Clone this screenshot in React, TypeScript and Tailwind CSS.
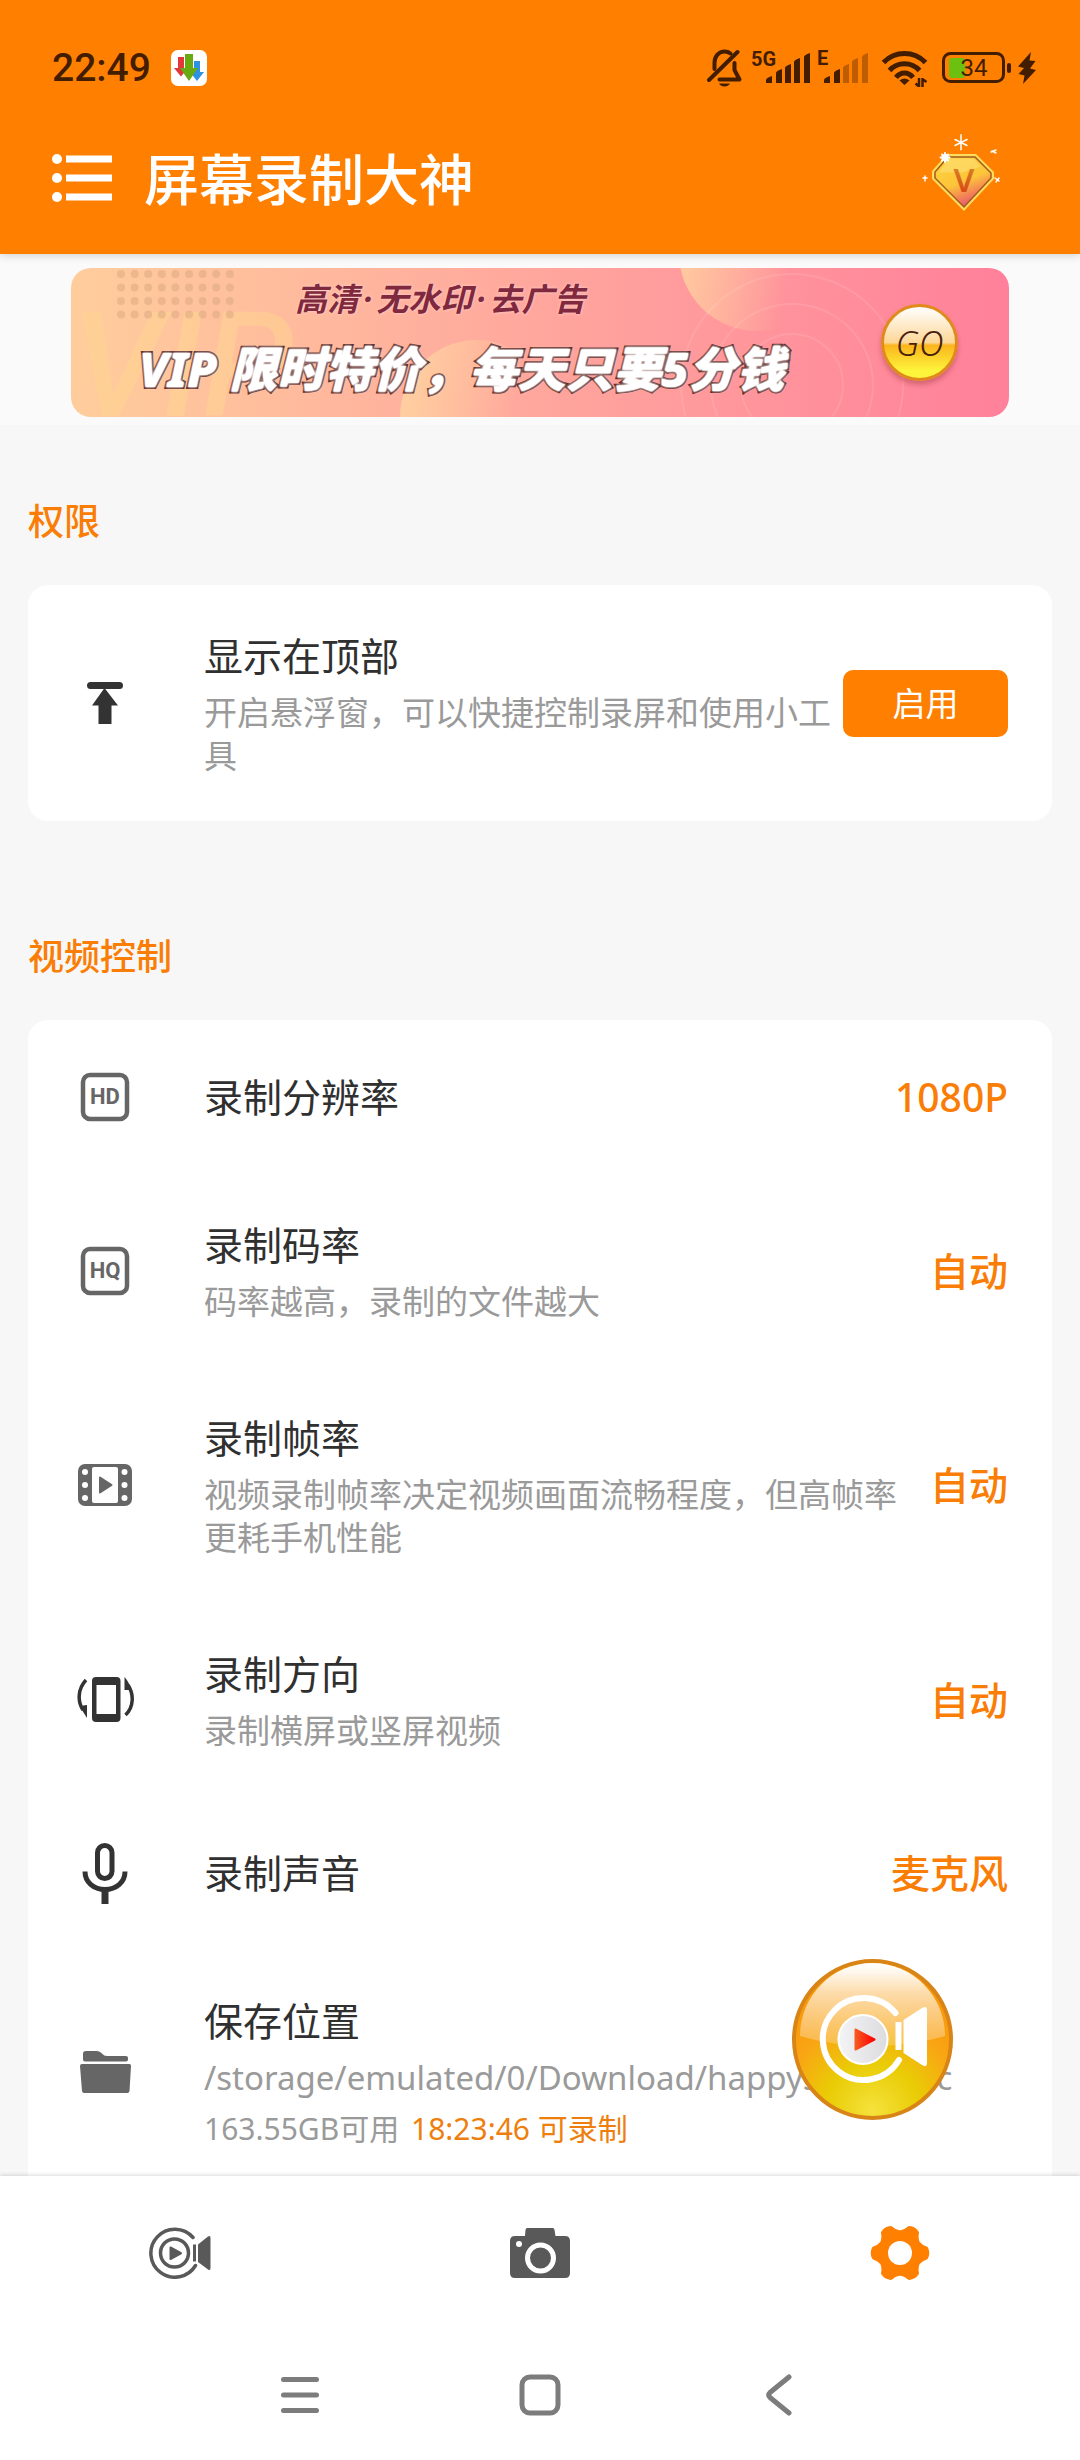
import type { ReactNode } from "react";

function StatusIcons() {
  return (
    <div className="flex items-center text-[#431d00]">
      <svg width="36" height="38" viewBox="0 0 36 38" fill="none" stroke="currentColor" strokeWidth="4" strokeLinecap="round" strokeLinejoin="round" aria-label="静音">
        <path d="M7.5 20V14C7.500 7 12 2.500 17.500 2.500c2.500 0 4.500.800 6 2" />
        <path d="M2 31L30.500 3" />
        <path d="M27.500 14v7l5 9.500H12.500" />
        <path d="M12 34.500h11c-1 2-3 3-5.500 3s-4.500-1-5.500-3z" fill="currentColor" stroke="none" />
      </svg>
      <svg className="ml-2" width="60" height="44" viewBox="0 0 60 44" fill="currentColor" aria-label="5G">
        <text x="0" y="20" fontFamily="Roboto, sans-serif" fontWeight="700" fontSize="20">5G</text>
        <path d="M15 37v-3q0-2 6-4v7zM25 37V27q0-2 6-4v14zM34 37V22q0-2 6-4v19zM43 37V16q0-2 6-4v25zM53 37V11q0-2 6-4v30z" />
      </svg>
      <svg className="ml-1.5" width="52" height="44" viewBox="0 0 52 44" fill="currentColor" aria-label="E">
        <text x="0" y="19" fontFamily="Roboto, sans-serif" fontWeight="700" fontSize="20">E</text>
        <path d="M7 37v-3q0-2 6-4v7zM17 37V27q0-2 6-4v14z" />
        <path opacity=".35" d="M26 37V22q0-2 6-4v19zM35 37V16q0-2 6-4v25zM45 37V11q0-2 6-4v30z" />
      </svg>
      <svg className="ml-3" width="47" height="38" viewBox="0 0 47 38" fill="none" stroke="currentColor" strokeWidth="5" aria-label="Wi-Fi">
        <path d="M2.500 13.500C14 1.500 33 1.500 44.500 13.500" />
        <path d="M8.500 21.500C16.500 12.500 30.500 12.500 38.500 21.500" />
        <path d="M15 28.500C19.500 22.500 27.500 22.500 32 28.500" />
        <path d="M18.500 31.500q5-4 10 0L23.500 36z" fill="currentColor" stroke="none" />
        <path d="M38 29v9M34.500 34.500l3.500 3M41.500 38v-9M41.500 30l4 3" strokeWidth="2.500" />
      </svg>
      <svg className="ml-3.5" width="70" height="32" viewBox="0 0 70 32" aria-label="电量 34%">
        <rect x="7" y="6" width="16" height="20" rx="3" fill="#6cc010" />
        <rect x="1.500" y="1.500" width="60" height="28" rx="7" fill="none" stroke="currentColor" strokeWidth="3" />
        <rect x="65" y="11" width="4" height="10" rx="2" fill="currentColor" />
        <text x="32" y="24" textAnchor="middle" fontFamily="Roboto, sans-serif" fontSize="24" fill="currentColor">34</text>
      </svg>
      <svg className="ml-1.5" width="18" height="32" viewBox="0 0 18 32" fill="currentColor" aria-label="充电中">
        <path d="M13 0L0 14.500l6 1.500L.500 22l6 1.500L5 32 18 18l-6-1.500L17.500 9l-6-.500z" />
      </svg>
    </div>
  );
}

function DownloadBadge() {
  return (
    <svg width="36" height="36" viewBox="0 0 36 36" aria-hidden="true">
      <rect width="36" height="36" rx="7" fill="#fff" />
      <path d="M7 7h6v11h4l-7 8.500L3 18h4z" fill="#e2383a" />
      <path d="M23 11h6v11h4l-7 9-7-9h4z" fill="#2f92e0" />
      <path d="M14 4h8v14h5l-9 13-9-13h5z" fill="#67aa12" />
    </svg>
  );
}

function VipGem() {
  return (
    <svg width="80" height="90" viewBox="0 0 80 90" aria-hidden="true">
      <defs>
        <linearGradient id="gem" x1="0.25" y1="0" x2="0.7" y2="1">
          <stop offset="0" stopColor="#fdd23c" />
          <stop offset=".5" stopColor="#fcc53a" />
          <stop offset=".72" stopColor="#f58a52" />
          <stop offset="1" stopColor="#e14580" />
        </linearGradient>
        <linearGradient id="gemV" x1="0" y1="0" x2="0" y2="1">
          <stop offset="0" stopColor="#d99a2c" />
          <stop offset="1" stopColor="#d8300e" />
        </linearGradient>
      </defs>
      <path d="M25 20h29l18 18v7L42 77 10 45v-8z" fill="#fbdc5c" />
      <path d="M26 23h27l16 16v5L42 73 13 44v-6z" fill="url(#gem)" stroke="#a55a1c" strokeWidth="1.500" />
      <path d="M27 24.500h24l8 8-18 6-24 0z" fill="#ffe58a" opacity=".45" />
      <text x="42" y="58" textAnchor="middle" fontFamily="'Noto Sans', sans-serif" fontWeight="600" fontSize="33" fill="url(#gemV)">V</text>
      <g stroke="#fff" strokeWidth="1.500" strokeLinecap="round">
        <path d="M39 .800v15M33 5.500l12 6M33 11.500l12-6" />
        <path d="M23 19v9M18.500 23.500h9M20 20.500l6 6M20 26.500l6-6" strokeWidth="2" />
        <path d="M1 44h4M3 42v5M73 44l4 3M77 44l-3 4M69 18l5-2M70 17l4 2" />
      </g>
      <circle cx="23" cy="23.500" r="3.500" fill="#fff" />
    </svg>
  );
}

function BannerArt() {
  const dots = [];
  for (let r = 0; r < 4; r++) for (let c = 0; c < 9; c++) dots.push([50 + c * 13.6, 6 + r * 13.5]);
  return (
    <svg className="absolute inset-0 h-full w-full" viewBox="0 0 938 149" preserveAspectRatio="xMidYMid slice" aria-hidden="true">
      <defs>
        <linearGradient id="peach" x1="0" x2="1" y1="0" y2="0.2">
          <stop offset="0" stopColor="#ffd2a0" />
          <stop offset=".8" stopColor="#ffd2a0" stopOpacity="0" />
        </linearGradient>
      </defs>
      <text x="0" y="148" fontFamily="Roboto, sans-serif" fontStyle="italic" fontWeight="500" fontSize="146" fill="#ffd590" opacity=".5">VIP</text>
      {dots.map(([x, y], i) => (
        <circle key={i} cx={x} cy={y} r="4" fill="#dca982" opacity=".55" />
      ))}
      <circle cx="686" cy="-15" r="78" fill="url(#peach)" />
      <circle cx="406" cy="149" r="77" fill="url(#peach)" />
      <g fill="none" stroke="#fff" strokeOpacity=".1" strokeWidth="2">
        <circle cx="721" cy="117" r="51" />
        <circle cx="721" cy="117" r="81" />
        <circle cx="721" cy="117" r="111" />
      </g>
    </svg>
  );
}

function TopArrowIcon() {
  return (
    <svg width="36" height="42" viewBox="0 0 36 42" fill="#333" aria-hidden="true">
      <rect width="36" height="7" rx="3.500" />
      <path d="M17.500 6L31 23.500h-6.500V42h-13V23.500H5z" />
    </svg>
  );
}

function BoxedLabelIcon({ label }: { label: string }) {
  return (
    <svg width="50" height="50" viewBox="0 0 50 50" aria-hidden="true">
      <rect x="3" y="3" width="44" height="44" rx="7" fill="none" stroke="#666" strokeWidth="4.500" />
      <text x="25" y="32" textAnchor="middle" fontFamily="Roboto, sans-serif" fontWeight="700" fontSize="22" fill="#666">{label}</text>
    </svg>
  );
}

function FilmIcon() {
  return (
    <svg width="54" height="42" viewBox="0 0 54 42" aria-hidden="true">
      <rect width="54" height="42" rx="7" fill="#666" />
      <rect x="14" y="3" width="26" height="36" rx="2" fill="#fff" />
      <path d="M22 13.500L33.500 21 22 28.500z" fill="#666" stroke="#666" strokeWidth="2" strokeLinejoin="round" />
      <g fill="#fff">
        <circle cx="7" cy="8" r="3" /><circle cx="7" cy="21" r="3" /><circle cx="7" cy="34" r="3" />
        <circle cx="46.500" cy="8" r="3" /><circle cx="46.500" cy="21" r="3" /><circle cx="46.500" cy="34" r="3" />
      </g>
    </svg>
  );
}

function RotateIcon() {
  return (
    <svg width="57" height="46" viewBox="0 0 57 46" fill="none" stroke="#333" strokeWidth="3.500" aria-hidden="true">
      <rect x="15" width="28.500" height="45" rx="4" fill="#333" stroke="none" />
      <rect x="19.500" y="8" width="19.500" height="29" fill="#fff" stroke="none" />
      <path d="M9 3C.500 12 .500 25 6 33" />
      <path d="M10 28v13L3 30q3-2 7-2z" fill="#333" stroke="none" />
      <path d="M48.500 38C57 30 57 17 51 8" />
      <path d="M47.500 0v13h6Q53 6 47.500 0z" fill="#333" stroke="none" />
    </svg>
  );
}

function MicIcon() {
  return (
    <svg width="46" height="61" viewBox="0 0 46 61" fill="none" stroke="#333" aria-hidden="true">
      <rect x="15.500" y="2.500" width="14.500" height="33" rx="7.250" strokeWidth="5" />
      <path d="M3 28.500c0 11 9 18 20 18s20-7 20-18" strokeWidth="5" />
      <path d="M23 46v15" strokeWidth="7" />
    </svg>
  );
}

function FolderIcon() {
  return (
    <svg width="51" height="42" viewBox="0 0 51 42" fill="#666" aria-hidden="true">
      <path d="M3 2.500Q3 0 6 0h11q3 0 5 2.500T27 5h19q2 0 2 2v1.500q0 2-2 2H5q-2 0-2-2z" />
      <path d="M2 13h47q2.200 0 2 2l-1.500 25q-.200 2-2.200 2H4.200q-2 0-2.200-2L0 15q0-2 2-2z" />
    </svg>
  );
}

function RecordTabIcon() {
  return (
    <svg width="62" height="52" viewBox="0 0 62 52" fill="none" stroke="#595959" strokeWidth="3.500" aria-hidden="true">
      <path d="M44 10.500A24 24 0 1 0 46.500 38.500" strokeLinecap="round" />
      <circle cx="25.500" cy="26" r="14" />
      <path d="M21.500 20.500v11.500l10.500-5.750z" fill="#595959" strokeWidth="2" strokeLinejoin="round" />
      <path d="M45.500 17.500v17" strokeWidth="3" />
      <path d="M49 17.500L59 9.500Q61.500 8 61.500 11V41q0 3-2.500 1.500L49 35z" fill="#595959" stroke="none" />
    </svg>
  );
}

function CameraTabIcon() {
  return (
    <svg width="60" height="50" viewBox="0 0 60 50" aria-hidden="true">
      <path d="M17.500 0h25q2 0 2 2l1 6H55q5 0 5 5v32q0 5-5 5H5q-5 0-5-5V13q0-5 5-5h10l.500-6q0-2 2-2z" fill="#595959" />
      <circle cx="30.500" cy="30" r="13" fill="none" stroke="#fff" strokeWidth="5" />
      <circle cx="9" cy="16" r="3" fill="#fff" />
    </svg>
  );
}

function GearTabIcon() {
  const p = (r: number, deg: number) => {
    const a = (deg * Math.PI) / 180;
    return `${(30 + r * Math.cos(a)).toFixed(2)} ${(30 + r * Math.sin(a)).toFixed(2)}`;
  };
  let d = "M" + p(26.5, -10);
  for (let a = 0; a < 360; a += 60) {
    d += `Q${p(28.5, a)} ${p(26.5, a + 10)}Q${p(22, a + 16)} ${p(20.5, a + 30)}Q${p(22, a + 44)} ${p(26.5, a + 50)}`;
  }
  return (
    <svg width="60" height="60" viewBox="0 0 60 60" aria-hidden="true">
      <path d={d + "z"} fill="#ff7f00" stroke="#ff7f00" strokeWidth="4" strokeLinejoin="round" />
      <circle cx="30" cy="30" r="12" fill="#fff" />
    </svg>
  );
}

function FloatingRecordArt() {
  return (
    <svg width="161" height="161" viewBox="0 0 161 161" aria-hidden="true">
      <defs>
        <radialGradient id="orb" cx=".5" cy=".95" r=".75">
          <stop offset="0" stopColor="#f5e23c" />
          <stop offset=".4" stopColor="#e9cc05" />
          <stop offset=".75" stopColor="#f9a614" />
          <stop offset="1" stopColor="#f99a0c" />
        </radialGradient>
        <linearGradient id="gloss" x1="0" x2="0" y1="0" y2="1">
          <stop offset="0" stopColor="#fff" />
          <stop offset=".12" stopColor="#fff" stopOpacity=".92" />
          <stop offset=".35" stopColor="#fff" stopOpacity=".66" />
          <stop offset="1" stopColor="#fff" stopOpacity=".2" />
        </linearGradient>
        <linearGradient id="play" x1="0" x2="1"><stop offset="0" stopColor="#f65a20" /><stop offset="1" stopColor="#f00" /></linearGradient>
        <linearGradient id="disc" x1="0" x2="1"><stop offset="0" stopColor="#f4f4f6" /><stop offset="1" stopColor="#dcdcde" /></linearGradient>
      </defs>
      <circle cx="80.500" cy="80.500" r="78.500" fill="url(#orb)" stroke="#d98416" strokeWidth="4" />
      <path d="M8 77A72.500 73 0 0 1 153 77Q120 87 80 87T8 77z" fill="url(#gloss)" />
      <path d="M103.500 54A41 41 0 1 0 107 101" fill="none" stroke="#fff" strokeWidth="6" strokeLinecap="round" />
      <path d="M106.500 63v28" stroke="#fff" strokeWidth="6" />
      <path d="M111.500 61L130 49Q135 46 135 51v53q0 5-5 2L111.500 94z" fill="#fff" />
      <circle cx="71" cy="80.500" r="24.500" fill="url(#disc)" stroke="#fff" strokeWidth="2" />
      <path d="M63.500 70.500L82.500 80.500 63.500 90.500z" fill="url(#play)" stroke="url(#play)" strokeWidth="2" strokeLinejoin="round" />
    </svg>
  );
}

function RowText({ title, children }: { title: string; children?: ReactNode }) {
  return (
    <span className="flex min-w-0 flex-1 flex-col gap-2">
      <span className="text-[39px] leading-[54px] text-[#303030]">{title}</span>
      {children}
    </span>
  );
}

function Desc({ children }: { children: ReactNode }) {
  return <span className="text-[33px] leading-[43px] text-[#9a9a9a]">{children}</span>;
}

function SettingRow({ icon, title, value, children }: { icon: ReactNode; title: string; value?: string; children?: ReactNode }) {
  return (
    <button type="button" className="flex min-h-[154px] w-full items-center gap-2 py-[44px] pr-[44px] text-left">
      <span className="mr-[14px] flex w-[154px] shrink-0 justify-center">{icon}</span>
      <RowText title={title}>{children}</RowText>
      {value && <span className="shrink-0 text-[39px] leading-[54px] font-medium text-[#fa7d05]">{value}</span>}
    </button>
  );
}

function Section({ title, children }: { title: string; children: ReactNode }) {
  return (
    <section className="px-7">
      <h2 className="py-9 text-[36px] leading-[54px] font-medium text-[#fa7d05]">{title}</h2>
      <div className="rounded-[20px] bg-white">{children}</div>
    </section>
  );
}

export default function App() {
  return (
    <div lang="zh-CN" className="relative flex h-screen flex-col bg-[#f7f7f7] font-['Noto_Sans','Noto_Sans_CJK_SC',sans-serif]">
      <header className="z-10 shrink-0 bg-[#ff7f00] shadow-[0_2px_8px_rgba(0,0,0,0.15)]">
        <div className="flex h-[104px] items-center justify-between pt-8 pr-[44px] pl-[52px]">
          <div className="flex items-center gap-5">
            <span className="font-['Roboto',sans-serif] text-[39px] leading-[44px] font-medium text-[#431d00]">22:49</span>
            <DownloadBadge />
          </div>
          <StatusIcons />
        </div>
        <div className="flex h-[150px] items-center pr-[78px] pl-[52px]">
          <button type="button" aria-label="菜单">
            <svg width="60" height="50" viewBox="0 0 60 50" fill="#fff" aria-hidden="true">
              <circle cx="5" cy="5" r="5" /><circle cx="5" cy="24" r="5" /><circle cx="5" cy="43" r="5" />
              <rect x="14" y="1.500" width="46" height="7" /><rect x="14" y="20.500" width="46" height="7" /><rect x="14" y="39.500" width="46" height="7" />
            </svg>
          </button>
          <h1 className="ml-8 flex-1 text-[55px] leading-[72px] font-medium text-white">屏幕录制大神</h1>
          <button type="button" aria-label="VIP">
            <VipGem />
          </button>
        </div>
      </header>

      <main className="min-h-0 flex-1 overflow-y-auto [scrollbar-width:none]">
        <div className="mb-[34px] bg-[#fafafa] px-[71px] pt-[14px] pb-2">
          <div className="relative flex h-[149px] items-center justify-between overflow-hidden rounded-[20px] bg-linear-to-r from-[#ffcd9c] via-[#ffa69d] to-[#ff809a] pr-[51px] pl-[68px]">
            <BannerArt />
            <div className="relative flex h-full flex-col items-start gap-5 pt-2 italic">
              <p className="pl-[156px] text-[32px] leading-[46px] font-bold whitespace-nowrap text-[#80283d] [text-shadow:0_0_3px_#ffd9d9]">
                高清<span className="mx-1">·</span>无水印<span className="mx-1">·</span>去广告
              </p>
              <p className="text-[48px] leading-[54px] font-extrabold whitespace-nowrap text-white [-webkit-text-stroke:4px_#5c2a26] [paint-order:stroke_fill] [text-shadow:0_0_3px_#fff,0_0_2px_#fff]">
                VIP 限时特价，每天只要5分钱
              </p>
            </div>
            <button type="button" className="relative flex size-[77px] items-center justify-center rounded-full border-3 border-[#e08a1c] bg-[linear-gradient(#fff,#fdd797_50%,#fbb51c_54%,#fdf53c_90%)] text-[34px] leading-none font-light text-[#4a1d0c] italic shadow-[0_4px_5px_rgba(150,50,60,0.4)]">
              GO
            </button>
          </div>
        </div>

        <div className="flex flex-col gap-[73px]">
          <Section title="权限">
            <div className="flex items-center gap-2 py-[44px] pr-[44px]">
              <span className="mr-[14px] flex w-[154px] shrink-0 justify-center"><TopArrowIcon /></span>
              <RowText title="显示在顶部">
                <Desc>开启悬浮窗，可以快捷控制录屏和使用小工具</Desc>
              </RowText>
              <button type="button" className="h-[67px] w-[165px] shrink-0 rounded-[10px] bg-[#ff7f00] text-[33px] leading-[43px] text-white">启用</button>
            </div>
          </Section>

          <Section title="视频控制">
            <SettingRow icon={<BoxedLabelIcon label="HD" />} title="录制分辨率" value="1080P" />
            <SettingRow icon={<BoxedLabelIcon label="HQ" />} title="录制码率" value="自动">
              <Desc>码率越高，录制的文件越大</Desc>
            </SettingRow>
            <SettingRow icon={<FilmIcon />} title="录制帧率" value="自动">
              <Desc>视频录制帧率决定视频画面流畅程度，但高帧率更耗手机性能</Desc>
            </SettingRow>
            <SettingRow icon={<RotateIcon />} title="录制方向" value="自动">
              <Desc>录制横屏或竖屏视频</Desc>
            </SettingRow>
            <SettingRow icon={<MicIcon />} title="录制声音" value="麦克风" />
            <SettingRow icon={<FolderIcon />} title="保存位置">
              <Desc>/storage/emulated/0/Download/happyscreenrec</Desc>
              <span className="text-[30px] leading-[43px] text-[#9a9a9a]">
                163.55GB可用 <span className="ml-1 text-[#ee7f0e]">18:23:46 可录制</span>
              </span>
            </SettingRow>
          </Section>
        </div>
      </main>

      <button type="button" aria-label="开始录制" className="absolute right-[127px] bottom-[340px]">
        <FloatingRecordArt />
      </button>

      <footer className="z-10 shrink-0 bg-white shadow-[0_-1px_4px_rgba(0,0,0,0.15)]">
        <nav className="grid h-[154px] grid-cols-3 place-items-center">
          <button type="button" aria-label="录屏"><RecordTabIcon /></button>
          <button type="button" aria-label="截图"><CameraTabIcon /></button>
          <button type="button" aria-label="设置" aria-current="page"><GearTabIcon /></button>
        </nav>
        <div className="mx-auto grid h-[130px] w-2/3 grid-cols-3 place-items-center text-[#7c7c7c]">
          <button type="button" aria-label="最近任务">
            <svg width="40" height="42" viewBox="0 0 40 42" stroke="currentColor" strokeWidth="5" strokeLinecap="round" aria-hidden="true">
              <path d="M3.500 5.500h33M3.500 21h33M3.500 36.500h33" />
            </svg>
          </button>
          <button type="button" aria-label="主屏幕">
            <svg width="42" height="42" viewBox="0 0 42 42" fill="none" stroke="currentColor" strokeWidth="5" aria-hidden="true">
              <rect x="3" y="3" width="36" height="36" rx="8" />
            </svg>
          </button>
          <button type="button" aria-label="返回">
            <svg width="30" height="42" viewBox="0 0 30 42" fill="none" stroke="currentColor" strokeWidth="5" strokeLinecap="round" strokeLinejoin="round" aria-hidden="true">
              <path d="M24 3L5 18.500Q2.500 21 5 23.500L24 39" />
            </svg>
          </button>
        </div>
      </footer>
    </div>
  );
}
